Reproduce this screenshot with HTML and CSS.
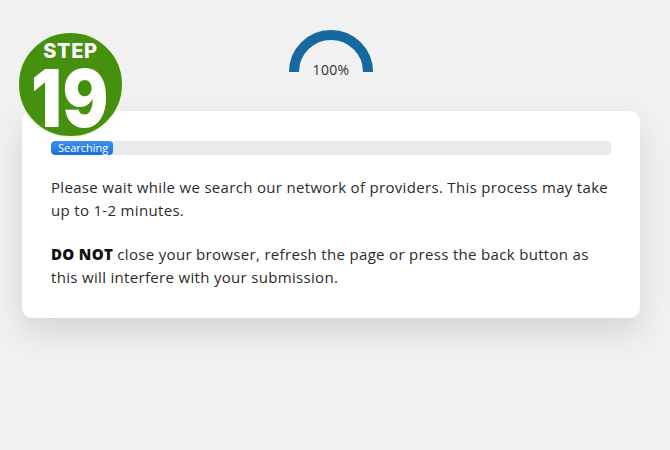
FILE: index.html
```html
<!DOCTYPE html>
<html>
<head>
<meta charset="utf-8">
<link rel="stylesheet" href="styles.css">
</head>
<body>
<div class="page">
  <div class="badge">
    <span class="badge-step">STEP</span>
    <span class="badge-num">19</span>
  </div>
  <div class="gauge">
    <svg class="gauge-arc" width="90" height="48" viewBox="0 0 90 48">
      <path d="M8 43 A37 37 0 0 1 82 43" fill="none" stroke="#1767a0" stroke-width="10"/>
    </svg>
    <span class="gauge-label">100%</span>
  </div>
  <div class="card">
    <div class="track">
      <div class="fill" style="width:62px">Searching</div>
    </div>
    <p class="msg">Please wait while we search our network of providers. This process may take up to 1-2 minutes.</p>
    <p class="msg"><strong>DO NOT</strong> close your browser, refresh the page or press the back button as this will interfere with your submission.</p>
  </div>
</div>
</body>
</html>
```
FILE: styles.css
```css
html, body {
  margin: 0;
  padding: 0;
  background: #f1f1f1;
  font-family: "Open Sans", "Liberation Sans", sans-serif;
  color: #2b2b2b;
}
.page {
  position: relative;
  width: 618px;
  margin-left: 22px;
  padding-top: 29px;
  height: 421px;
}
.gauge {
  position: relative;
  width: 90px;
  height: 82px;
  margin: 0 auto;
  display: flex;
  flex-direction: column;
  align-items: center;
}
.gauge-arc {
  display: block;
}
.gauge-label {
  position: absolute;
  top: 31px;
  left: 0;
  right: 0;
  text-align: center;
  font-size: 14px;
  letter-spacing: 0.3px;
  color: #333;
}
.card {
  background: #fff;
  border-radius: 10px;
  box-shadow: 0 14px 32px rgba(0,0,0,0.12);
  padding: 30px 29px 34px 29px;
  height: 207px;
  box-sizing: border-box;
}
.track {
  height: 14px;
  background: #e9eaec;
  border-radius: 4px;
  overflow: hidden;
}
.fill {
  height: 14px;
  background: linear-gradient(#3d8ff0, #1a6fe0);
  border-radius: 4px;
  color: #fff;
  font-size: 11px;
  line-height: 14px;
  padding-left: 7px;
  box-sizing: border-box;
  white-space: nowrap;
  overflow: hidden;
}
.msg {
  margin: 21px 0 0 0;
  font-size: 15px;
  line-height: 23px;
  letter-spacing: 0.32px;
  color: #2b2b2b;
}
.msg strong {
  font-weight: 800;
  color: #111;
}
.badge {
  position: absolute;
  left: -5px;
  top: 31px;
  width: 103px;
  height: 103px;
  border-radius: 50%;
  background: #45900e;
  border: 2px solid #eef4e6;
  z-index: 2;
  display: flex;
  flex-direction: column;
  align-items: center;
  font-family: "Inter", "Liberation Sans", sans-serif;
  color: #fff;
  font-weight: 800;
}
.badge-step {
  font-size: 20px;
  line-height: 16px;
  margin-top: 10px;
  letter-spacing: 0.6px;
}
.badge-num {
  display: inline-block;
  font-size: 80px;
  line-height: 58px;
  margin-top: 10px;
  font-weight: 900;
  letter-spacing: 1px;
  transform: scaleX(0.85);
}
```
